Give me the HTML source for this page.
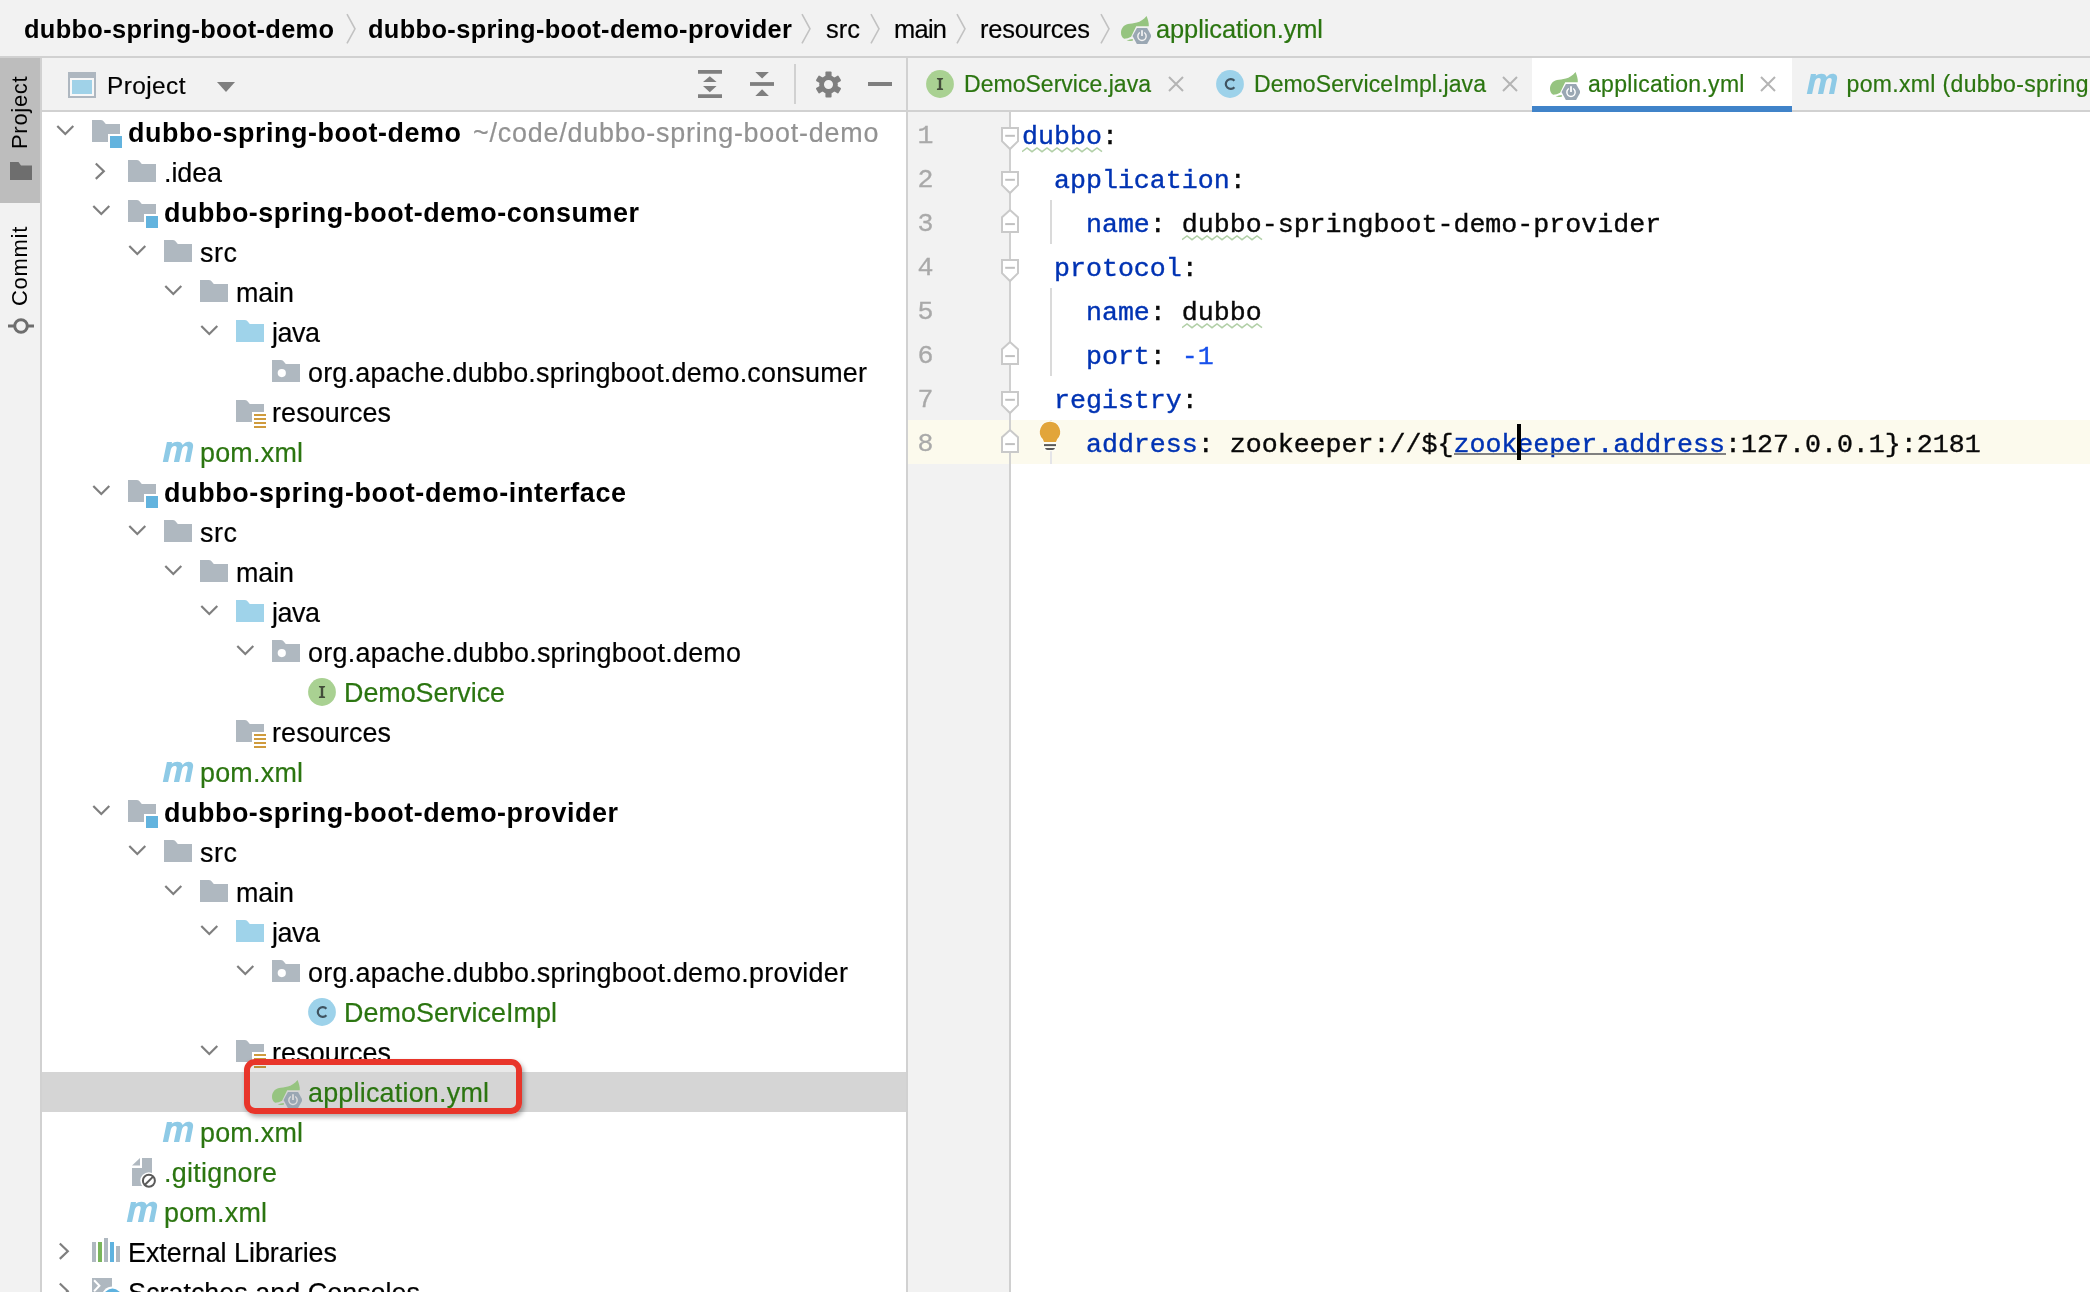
<!DOCTYPE html>
<html><head><meta charset="utf-8"><title>IDE</title>
<style>
*{box-sizing:border-box}
html,body{margin:0;padding:0}
body{width:2090px;height:1292px;overflow:hidden;background:#fff;position:relative;font-family:"Liberation Sans",sans-serif;color:#000}
#root{position:absolute;left:0;top:0;width:2090px;height:1292px;overflow:hidden;will-change:transform}
.abs{position:absolute}
.t{position:absolute;white-space:pre;line-height:40px;font-size:26px;-webkit-text-stroke:0.200px}
.b{font-weight:700;-webkit-text-stroke:0}
.g{color:#2b7510}
.ic{position:absolute;width:32px;height:32px}
#crumb{left:0;top:0;width:2090px;height:58px;background:#f2f2f2;border-bottom:2px solid #d1d1d1}
#stripe{left:0;top:58px;width:42px;height:1234px;background:#f2f2f2;border-right:2px solid #d1d1d1}
#stripesel{left:0;top:58px;width:40px;height:145px;background:#bdbdbd}
#phead{left:42px;top:58px;width:865px;height:54px;background:#f2f2f2;border-bottom:2px solid #d1d1d1}
#split{left:906px;top:58px;width:2px;height:1234px;background:#d1d1d1}
#tabs{left:908px;top:58px;width:1182px;height:54px;background:#f2f2f2;border-bottom:2px solid #d1d1d1}
#gutter{left:908px;top:112px;width:103px;height:1180px;background:#f2f2f2;border-right:2px solid #d0d0d0}
#curline{left:908px;top:420px;width:1182px;height:44px;background:#fcfaed}
#sel{left:42px;top:1072px;width:864px;height:40px;background:#d5d5d5}
.c{position:absolute;white-space:pre;font-family:"Liberation Mono",monospace;font-size:26.640px;line-height:44px;left:1022px;color:#080808;-webkit-text-stroke:0.380px}
.k{color:#0033b3}
.n{color:#1750eb}
.ln{position:absolute;left:917.500px;font-size:26.600px;line-height:44px;color:#a9a9a9;font-family:"Liberation Mono",monospace;-webkit-text-stroke:0.300px}
.w{background:repeating-linear-gradient(90deg,transparent,transparent);}
.vt{position:absolute;white-space:pre;font-size:22px;line-height:40px;transform-origin:0 0;transform:rotate(-90deg)}
.gray{color:#929292}
</style></head>
<body>

<svg width="0" height="0" style="position:absolute">
<defs>
<symbol id="i-folder" viewBox="0 0 32 32"><path d="M2 4h8.500q2 0 3 1.300L15.800 8H30v18H2z" fill="#afb8c0"/></symbol>
<symbol id="i-src" viewBox="0 0 32 32"><path d="M2 4h8.500q2 0 3 1.300L15.800 8H30v18H2z" fill="#9fd3ea"/></symbol>
<symbol id="i-module" viewBox="0 0 32 32"><path d="M2 4h8.500q2 0 3 1.300L15.800 8H30v10H18v8H2z" fill="#afb8c0"/><rect x="20" y="20" width="12" height="12" fill="#62b3de"/></symbol>
<symbol id="i-pkg" viewBox="0 0 32 32"><path d="M2 4h8.500q2 0 3 1.300L15.800 8H30v18H2z" fill="#afb8c0"/><circle cx="11.800" cy="17.100" r="4.100" fill="#fff"/></symbol>
<symbol id="i-res" viewBox="0 0 32 32"><path d="M2 4h8.500q2 0 3 1.300L15.800 8H30v8H18v10H2z" fill="#afb8c0"/><path d="M20 18h12v2H20zM20 22h12v2H20zM20 26h12v2H20zM20 30h12v2H20z" fill="#cf9b3d"/></symbol>
<symbol id="i-I" viewBox="0 0 32 32"><circle cx="16" cy="16" r="13.900" fill="#a9d192"/><path d="M12.900 10h6.200v0.600q0 1.100-1.300 1.100h-0.600v8.600h0.600q1.300 0 1.300 1.100v0.600h-6.200v-0.600q0-1.100 1.300-1.100h0.600v-8.600h-0.600q-1.300 0-1.300-1.100z" fill="#434d3a"/></symbol>
<symbol id="i-C" viewBox="0 0 32 32"><circle cx="16" cy="16" r="13.900" fill="#9dd2ea"/><path d="M20.400 19.200a4.900 4.900 0 1 1 0-6.400" fill="none" stroke="#3f5360" stroke-width="2.200"/></symbol>
<symbol id="i-m" viewBox="0 0 32 32"><path d="M0.800 26.100L4.900 6H10L9.700 7.800C11.300 6.400 13.300 5.700 15.300 5.700C18.300 5.700 20.100 6.900 20.600 9C22.300 6.900 24.400 5.700 26.600 5.700C29.900 5.700 31.700 7.800 31 11.200L28.100 26.100H23L25.600 12.900C26 10.900 25.300 9.900 23.800 9.900C21.900 9.900 20.400 11.400 19.900 13.700L17.200 26.100H11.900L14.600 12.900C15 10.900 14.300 9.900 12.800 9.900C10.900 9.900 9.300 11.400 8.800 13.700L6.100 26.100z" fill="#8ecae6"/></symbol>
<symbol id="i-yml" viewBox="0 0 32 32"><path d="M27.600 2.900C28.800 6 30 9.500 29.800 13.300H17.200L12.100 23.700C10 25 7.500 25.700 5.200 25.700C3 24.500 2 22.500 2 20C2 15.500 4.500 12 9 11C14 10 21.500 10.500 27.600 2.900z" fill="#96c480"/><path d="M7.600 27.600Q11 26.200 13.800 25.900v1.900Q10 28.200 7.600 27.600z" fill="#96c480"/><path d="M17.900 15.100h10.200l4.400 7.900-4.400 7.900H17.900l-4.400-7.900z" fill="#9aa7b3"/><circle cx="23" cy="23.300" r="4.150" fill="none" stroke="var(--pw,#f2f2f2)" stroke-width="1.450"/><path d="M23 16.500v6.500" stroke="#9aa7b3" stroke-width="4.200"/><path d="M23 17.200v5.800" stroke="var(--pw,#f2f2f2)" stroke-width="1.750"/></symbol>
<symbol id="i-git" viewBox="0 0 32 32"><path d="M16 2h10v28H6V12h10z" fill="#afb8c0"/><path d="M6 9.500L14 2v7.500z" fill="#afb8c0"/><circle cx="22.900" cy="24.800" r="8.600" fill="#fff"/><circle cx="22.900" cy="24.800" r="6" fill="none" stroke="#5a5a5a" stroke-width="2"/><path d="M18.700 29l8.400-8.400" stroke="#5a5a5a" stroke-width="2"/></symbol>
<symbol id="i-lib" viewBox="0 0 32 32"><rect x="2" y="6" width="4" height="20" fill="#afb8c0"/><rect x="8" y="6" width="4" height="20" fill="#7ab55c"/><rect x="14" y="2" width="4" height="24" fill="#afb8c0"/><rect x="20" y="6" width="4" height="20" fill="#5eb2df"/><rect x="26" y="10" width="4" height="16" fill="#afb8c0"/></symbol>
<symbol id="i-scr" viewBox="0 0 32 32"><path d="M2 2h20v24H2z" fill="#afb8c0"/><path d="M4.100 4.300l5.300 5.500-5.300 5.500" fill="none" stroke="#fff" stroke-width="2"/><circle cx="22.500" cy="21.500" r="11" fill="#fff"/><circle cx="22.500" cy="21.500" r="9" fill="#5eb2df"/></symbol>
<symbol id="i-down" viewBox="0 0 32 32"><path d="M8.300 10l8 8 8-8" fill="none" stroke="#7f7f7f" stroke-width="2.200"/></symbol>
<symbol id="i-right" viewBox="0 0 32 32"><path d="M10.800 7.500l8 7.700-8 7.700" fill="none" stroke="#7f7f7f" stroke-width="2.200"/></symbol>
<symbol id="i-x" viewBox="0 0 32 32"><path d="M9 9l14 14M23 9L9 23" stroke="#b4b4b4" stroke-width="2" fill="none"/></symbol>
<symbol id="f-start" viewBox="0 0 20 26"><path d="M2 2h16v13.200l-8 7.800-8-7.800z" fill="#fff" stroke="#c9c9c9" stroke-width="2"/><path d="M5.200 9.800h9.700" stroke="#c0c0c0" stroke-width="2"/></symbol>
<symbol id="f-end" viewBox="0 0 20 26"><path d="M2 24h16V9.200L10 2 2 9.200z" fill="#fff" stroke="#c9c9c9" stroke-width="2"/><path d="M5.200 16.100h9.700" stroke="#c0c0c0" stroke-width="2"/></symbol>
</defs>
</svg>
<div id="root">
<div class="abs" id="crumb"></div>
<span class="t b" style="left:24px;top:8.9px;letter-spacing:0.324px;font-size:25.4px;line-height:40px;">dubbo-spring-boot-demo</span>
<span class="t b" style="left:368px;top:8.9px;letter-spacing:0.358px;font-size:25.4px;line-height:40px;">dubbo-spring-boot-demo-provider</span>
<span class="t " style="left:826px;top:8.9px;letter-spacing:0.07px;font-size:25.4px;line-height:40px;">src</span>
<span class="t " style="left:894px;top:8.9px;letter-spacing:-0.682px;font-size:25.4px;line-height:40px;">main</span>
<span class="t " style="left:980px;top:8.9px;letter-spacing:-0.186px;font-size:25.4px;line-height:40px;">resources</span>
<span class="t g" style="left:1156px;top:8.9px;letter-spacing:-0.068px;font-size:25.4px;line-height:40px;">application.yml</span>
<svg class="abs" style="left:345px;top:13px" width="12" height="32"><path d="M2 1.200l8 14.600-8 14.600" fill="none" stroke="#c2c2c2" stroke-width="1.600"/></svg>
<svg class="abs" style="left:800.4px;top:13px" width="12" height="32"><path d="M2 1.200l8 14.600-8 14.600" fill="none" stroke="#c2c2c2" stroke-width="1.600"/></svg>
<svg class="abs" style="left:868.9px;top:13px" width="12" height="32"><path d="M2 1.200l8 14.600-8 14.600" fill="none" stroke="#c2c2c2" stroke-width="1.600"/></svg>
<svg class="abs" style="left:954.9px;top:13px" width="12" height="32"><path d="M2 1.200l8 14.600-8 14.600" fill="none" stroke="#c2c2c2" stroke-width="1.600"/></svg>
<svg class="abs" style="left:1099.1px;top:13px" width="12" height="32"><path d="M2 1.200l8 14.600-8 14.600" fill="none" stroke="#c2c2c2" stroke-width="1.600"/></svg>
<svg class="ic" style="left:1118.6px;top:12.9px;width:32px;height:32px;"><use href="#i-yml"/></svg>
<div class="abs" id="stripe"></div><div class="abs" id="stripesel"></div>
<span class="vt" style="left:0px;top:148.500px;letter-spacing:0.700px">Project</span>
<span class="vt" style="left:0px;top:305.500px;letter-spacing:0.700px">Commit</span>
<svg class="abs" style="left:10px;top:162px" width="22" height="18"><path d="M0 0h8.500l2.500 3.500h11V18H0z" fill="#6e6e6e"/></svg>
<svg class="abs" style="left:8px;top:314px" width="26" height="24"><circle cx="13" cy="12" r="6.300" fill="none" stroke="#6e6e6e" stroke-width="3"/><path d="M0 12h6M20 12h6" stroke="#6e6e6e" stroke-width="3"/></svg>
<div class="abs" id="phead"></div>
<svg class="abs" style="left:68px;top:72px" width="28" height="26"><rect width="28" height="26" fill="#aeb7c0"/><rect x="2" y="6" width="24" height="18" fill="#f8f8f8"/><rect x="4" y="8" width="20" height="14" fill="#a0d2e8"/></svg>
<span class="t " style="left:107px;top:65.6px;letter-spacing:0.43px;font-size:24.4px;line-height:40px;">Project</span>
<svg class="abs" style="left:217px;top:82px" width="18" height="10"><path d="M0 0h18l-9 10z" fill="#7f7f7f"/></svg>
<svg class="abs" style="left:698px;top:70px" width="24" height="28"><path d="M0 0h24v3.800H0zM0 24.200h24V28H0z" fill="#7f7f7f"/><path d="M5 12l6.800-5.800 6.800 5.800zM5 16l6.800 6.200 6.800-6.200z" fill="#7f7f7f"/></svg>
<svg class="abs" style="left:750px;top:70px" width="24" height="28"><path d="M0 12.100h24v3.800H0z" fill="#7f7f7f"/><path d="M5.300 2.100l6.800 6.500 6.800-6.500zM5.300 25.900l6.800-6.600 6.800 6.600z" fill="#7f7f7f"/></svg>
<div class="abs" style="left:794px;top:64px;width:2px;height:40px;background:#d1d1d1"></div>
<svg class="abs" style="left:815px;top:70.500px" width="27" height="27" viewBox="-14 -14 28 28"><g fill="#7f7f7f"><rect x="-3.200" y="-13.500" width="6.400" height="8" rx="1" transform="rotate(0)"/><rect x="-3.200" y="-13.500" width="6.400" height="8" rx="1" transform="rotate(60)"/><rect x="-3.200" y="-13.500" width="6.400" height="8" rx="1" transform="rotate(120)"/><rect x="-3.200" y="-13.500" width="6.400" height="8" rx="1" transform="rotate(180)"/><rect x="-3.200" y="-13.500" width="6.400" height="8" rx="1" transform="rotate(240)"/><rect x="-3.200" y="-13.500" width="6.400" height="8" rx="1" transform="rotate(300)"/></g><circle r="7.200" fill="none" stroke="#7f7f7f" stroke-width="5"/></svg>
<div class="abs" style="left:868px;top:82px;width:24px;height:4px;background:#7f7f7f"></div>
<div class="abs" id="sel"></div>
<svg class="ic" style="left:49px;top:116px;width:32px;height:32px;"><use href="#i-down"/></svg>
<svg class="ic" style="left:90px;top:116px;width:32px;height:32px;"><use href="#i-module"/></svg>
<span class="t b" style="left:128px;top:112.8px;letter-spacing:0.565px;font-size:26.9px;line-height:40px;">dubbo-spring-boot-demo</span>
<span class="t gray" style="left:473px;top:112.8px;letter-spacing:0.787px;font-size:26.9px;line-height:40px;">~/code/dubbo-spring-boot-demo</span>
<svg class="ic" style="left:85px;top:156px;width:32px;height:32px;"><use href="#i-right"/></svg>
<svg class="ic" style="left:126px;top:156px;width:32px;height:32px;"><use href="#i-folder"/></svg>
<span class="t " style="left:164px;top:152.8px;letter-spacing:-0.078px;font-size:26.9px;line-height:40px;">.idea</span>
<svg class="ic" style="left:85px;top:196px;width:32px;height:32px;"><use href="#i-down"/></svg>
<svg class="ic" style="left:126px;top:196px;width:32px;height:32px;"><use href="#i-module"/></svg>
<span class="t b" style="left:164px;top:192.8px;letter-spacing:0.547px;font-size:26.9px;line-height:40px;">dubbo-spring-boot-demo-consumer</span>
<svg class="ic" style="left:121px;top:236px;width:32px;height:32px;"><use href="#i-down"/></svg>
<svg class="ic" style="left:162px;top:236px;width:32px;height:32px;"><use href="#i-folder"/></svg>
<span class="t " style="left:200px;top:232.8px;letter-spacing:0.57px;font-size:26.9px;line-height:40px;">src</span>
<svg class="ic" style="left:157px;top:276px;width:32px;height:32px;"><use href="#i-down"/></svg>
<svg class="ic" style="left:198px;top:276px;width:32px;height:32px;"><use href="#i-folder"/></svg>
<span class="t " style="left:236px;top:272.8px;letter-spacing:-0.099px;font-size:26.9px;line-height:40px;">main</span>
<svg class="ic" style="left:193px;top:316px;width:32px;height:32px;"><use href="#i-down"/></svg>
<svg class="ic" style="left:234px;top:316px;width:32px;height:32px;"><use href="#i-src"/></svg>
<span class="t " style="left:272px;top:312.8px;letter-spacing:-0.448px;font-size:26.9px;line-height:40px;">java</span>
<svg class="ic" style="left:270px;top:356px;width:32px;height:32px;"><use href="#i-pkg"/></svg>
<span class="t " style="left:308px;top:352.8px;letter-spacing:0.221px;font-size:26.9px;line-height:40px;">org.apache.dubbo.springboot.demo.consumer</span>
<svg class="ic" style="left:234px;top:396px;width:32px;height:32px;"><use href="#i-res"/></svg>
<span class="t " style="left:272px;top:392.8px;letter-spacing:0.115px;font-size:26.9px;line-height:40px;">resources</span>
<svg class="ic" style="left:162px;top:436px;width:32px;height:32px;"><use href="#i-m"/></svg>
<span class="t g" style="left:200px;top:432.8px;letter-spacing:0.232px;font-size:26.9px;line-height:40px;">pom.xml</span>
<svg class="ic" style="left:85px;top:476px;width:32px;height:32px;"><use href="#i-down"/></svg>
<svg class="ic" style="left:126px;top:476px;width:32px;height:32px;"><use href="#i-module"/></svg>
<span class="t b" style="left:164px;top:472.8px;letter-spacing:0.64px;font-size:26.9px;line-height:40px;">dubbo-spring-boot-demo-interface</span>
<svg class="ic" style="left:121px;top:516px;width:32px;height:32px;"><use href="#i-down"/></svg>
<svg class="ic" style="left:162px;top:516px;width:32px;height:32px;"><use href="#i-folder"/></svg>
<span class="t " style="left:200px;top:512.8px;letter-spacing:0.57px;font-size:26.9px;line-height:40px;">src</span>
<svg class="ic" style="left:157px;top:556px;width:32px;height:32px;"><use href="#i-down"/></svg>
<svg class="ic" style="left:198px;top:556px;width:32px;height:32px;"><use href="#i-folder"/></svg>
<span class="t " style="left:236px;top:552.8px;letter-spacing:-0.099px;font-size:26.9px;line-height:40px;">main</span>
<svg class="ic" style="left:193px;top:596px;width:32px;height:32px;"><use href="#i-down"/></svg>
<svg class="ic" style="left:234px;top:596px;width:32px;height:32px;"><use href="#i-src"/></svg>
<span class="t " style="left:272px;top:592.8px;letter-spacing:-0.448px;font-size:26.9px;line-height:40px;">java</span>
<svg class="ic" style="left:229px;top:636px;width:32px;height:32px;"><use href="#i-down"/></svg>
<svg class="ic" style="left:270px;top:636px;width:32px;height:32px;"><use href="#i-pkg"/></svg>
<span class="t " style="left:308px;top:632.8px;letter-spacing:0.271px;font-size:26.9px;line-height:40px;">org.apache.dubbo.springboot.demo</span>
<svg class="ic" style="left:306px;top:676px;width:32px;height:32px;"><use href="#i-I"/></svg>
<span class="t g" style="left:344px;top:672.8px;letter-spacing:-0.041px;font-size:26.9px;line-height:40px;">DemoService</span>
<svg class="ic" style="left:234px;top:716px;width:32px;height:32px;"><use href="#i-res"/></svg>
<span class="t " style="left:272px;top:712.8px;letter-spacing:0.115px;font-size:26.9px;line-height:40px;">resources</span>
<svg class="ic" style="left:162px;top:756px;width:32px;height:32px;"><use href="#i-m"/></svg>
<span class="t g" style="left:200px;top:752.8px;letter-spacing:0.232px;font-size:26.9px;line-height:40px;">pom.xml</span>
<svg class="ic" style="left:85px;top:796px;width:32px;height:32px;"><use href="#i-down"/></svg>
<svg class="ic" style="left:126px;top:796px;width:32px;height:32px;"><use href="#i-module"/></svg>
<span class="t b" style="left:164px;top:792.8px;letter-spacing:0.545px;font-size:26.9px;line-height:40px;">dubbo-spring-boot-demo-provider</span>
<svg class="ic" style="left:121px;top:836px;width:32px;height:32px;"><use href="#i-down"/></svg>
<svg class="ic" style="left:162px;top:836px;width:32px;height:32px;"><use href="#i-folder"/></svg>
<span class="t " style="left:200px;top:832.8px;letter-spacing:0.57px;font-size:26.9px;line-height:40px;">src</span>
<svg class="ic" style="left:157px;top:876px;width:32px;height:32px;"><use href="#i-down"/></svg>
<svg class="ic" style="left:198px;top:876px;width:32px;height:32px;"><use href="#i-folder"/></svg>
<span class="t " style="left:236px;top:872.8px;letter-spacing:-0.099px;font-size:26.9px;line-height:40px;">main</span>
<svg class="ic" style="left:193px;top:916px;width:32px;height:32px;"><use href="#i-down"/></svg>
<svg class="ic" style="left:234px;top:916px;width:32px;height:32px;"><use href="#i-src"/></svg>
<span class="t " style="left:272px;top:912.8px;letter-spacing:-0.448px;font-size:26.9px;line-height:40px;">java</span>
<svg class="ic" style="left:229px;top:956px;width:32px;height:32px;"><use href="#i-down"/></svg>
<svg class="ic" style="left:270px;top:956px;width:32px;height:32px;"><use href="#i-pkg"/></svg>
<span class="t " style="left:308px;top:952.8px;letter-spacing:0.27px;font-size:26.9px;line-height:40px;">org.apache.dubbo.springboot.demo.provider</span>
<svg class="ic" style="left:306px;top:996px;width:32px;height:32px;"><use href="#i-C"/></svg>
<span class="t g" style="left:344px;top:992.8px;letter-spacing:0.057px;font-size:26.9px;line-height:40px;">DemoServiceImpl</span>
<svg class="ic" style="left:193px;top:1036px;width:32px;height:32px;"><use href="#i-down"/></svg>
<svg class="ic" style="left:234px;top:1036px;width:32px;height:32px;"><use href="#i-res"/></svg>
<span class="t " style="left:272px;top:1032.8px;letter-spacing:0.115px;font-size:26.9px;line-height:40px;">resources</span>
<svg class="ic" style="left:270px;top:1077px;width:32px;height:32px;--pw:#dcdcdc"><use href="#i-yml"/></svg>
<span class="t g" style="left:308px;top:1072.8px;letter-spacing:0.223px;font-size:26.9px;line-height:40px;">application.yml</span>
<svg class="ic" style="left:162px;top:1116px;width:32px;height:32px;"><use href="#i-m"/></svg>
<span class="t g" style="left:200px;top:1112.8px;letter-spacing:0.232px;font-size:26.9px;line-height:40px;">pom.xml</span>
<svg class="ic" style="left:126px;top:1156px;width:32px;height:32px;"><use href="#i-git"/></svg>
<span class="t g" style="left:164px;top:1152.8px;letter-spacing:0.264px;font-size:26.9px;line-height:40px;">.gitignore</span>
<svg class="ic" style="left:126px;top:1196px;width:32px;height:32px;"><use href="#i-m"/></svg>
<span class="t g" style="left:164px;top:1192.8px;letter-spacing:0.232px;font-size:26.9px;line-height:40px;">pom.xml</span>
<svg class="ic" style="left:49px;top:1236px;width:32px;height:32px;"><use href="#i-right"/></svg>
<svg class="ic" style="left:90px;top:1236px;width:32px;height:32px;"><use href="#i-lib"/></svg>
<span class="t " style="left:128px;top:1232.8px;letter-spacing:-0.015px;font-size:26.9px;line-height:40px;">External Libraries</span>
<svg class="ic" style="left:49px;top:1276px;width:32px;height:32px;"><use href="#i-right"/></svg>
<svg class="ic" style="left:90px;top:1276px;width:32px;height:32px;"><use href="#i-scr"/></svg>
<span class="t " style="left:128px;top:1272.8px;letter-spacing:0.025px;font-size:26.9px;line-height:40px;">Scratches and Consoles</span>
<div class="abs" style="left:249px;top:1064px;width:268px;height:8px;background:rgba(0,0,0,.085)"></div>
<div class="abs" style="left:243.800px;top:1058.800px;width:278.200px;height:55.200px;border:6px solid #e8352a;border-radius:11px;box-shadow:2px 3px 5px rgba(0,0,0,.32)"></div>
<div class="abs" id="split"></div>
<div class="abs" id="tabs"></div>
<div class="abs" style="left:1532px;top:58px;width:260px;height:54px;background:#fff"></div>
<div class="abs" style="left:1532px;top:106px;width:260px;height:6px;background:#4083c9"></div>
<svg class="ic" style="left:924px;top:68px;width:32px;height:32px;"><use href="#i-I"/></svg>
<span class="t g" style="left:964px;top:64.2px;letter-spacing:0.024px;font-size:23px;line-height:40px;">DemoService.java</span>
<svg class="ic" style="left:1160px;top:68px;width:32px;height:32px;"><use href="#i-x"/></svg>
<svg class="ic" style="left:1214px;top:68px;width:32px;height:32px;"><use href="#i-C"/></svg>
<span class="t g" style="left:1254px;top:64.2px;letter-spacing:0.1px;font-size:23px;line-height:40px;">DemoServiceImpl.java</span>
<svg class="ic" style="left:1494px;top:68px;width:32px;height:32px;"><use href="#i-x"/></svg>
<svg class="ic" style="left:1547.8px;top:69px;width:32px;height:32px;--pw:#fff"><use href="#i-yml"/></svg>
<span class="t g" style="left:1588px;top:64.2px;letter-spacing:0.311px;font-size:23px;line-height:40px;">application.yml</span>
<svg class="ic" style="left:1752px;top:68px;width:32px;height:32px;"><use href="#i-x"/></svg>
<svg class="ic" style="left:1806px;top:68px;width:32px;height:32px;"><use href="#i-m"/></svg>
<span class="t g" style="left:1846.5px;top:64.2px;letter-spacing:0.339px;font-size:23px;line-height:40px;">pom.xml (dubbo-spring</span>
<div class="abs" id="curline"></div>
<div class="abs" id="gutter"></div>
<div class="abs" style="left:908px;top:420px;width:101px;height:44px;background:#fcfaed"></div>
<span class="ln" style="top:114px">1</span>
<span class="c" style="top:115px"><span class="k">dubbo</span>:</span>
<span class="ln" style="top:158px">2</span>
<span class="c" style="top:159px">  <span class="k">application</span>:</span>
<span class="ln" style="top:202px">3</span>
<span class="c" style="top:203px">    <span class="k">name</span>: dubbo-springboot-demo-provider</span>
<span class="ln" style="top:246px">4</span>
<span class="c" style="top:247px">  <span class="k">protocol</span>:</span>
<span class="ln" style="top:290px">5</span>
<span class="c" style="top:291px">    <span class="k">name</span>: dubbo</span>
<span class="ln" style="top:334px">6</span>
<span class="c" style="top:335px">    <span class="k">port</span>: <span class="n">-1</span></span>
<span class="ln" style="top:378px">7</span>
<span class="c" style="top:379px">  <span class="k">registry</span>:</span>
<span class="ln" style="top:422px">8</span>
<span class="c" style="top:423px">    <span class="k">address</span>: zookeeper://${<span class="k">zookeeper.address</span>:127.0.0.1}:2181</span>
<div class="abs" style="left:1050px;top:200px;width:2px;height:44px;background:#dadada"></div>
<div class="abs" style="left:1050px;top:288px;width:2px;height:88px;background:#dadada"></div>
<div class="abs" style="left:1050px;top:420px;width:2px;height:44px;background:#e4e4e8"></div>
<svg class="ic" style="left:1000px;top:126px;width:20px;height:26px;"><use href="#f-start"/></svg>
<svg class="ic" style="left:1000px;top:170px;width:20px;height:26px;"><use href="#f-start"/></svg>
<svg class="ic" style="left:1000px;top:207.5px;width:20px;height:26px;"><use href="#f-end"/></svg>
<svg class="ic" style="left:1000px;top:258px;width:20px;height:26px;"><use href="#f-start"/></svg>
<svg class="ic" style="left:1000px;top:339.5px;width:20px;height:26px;"><use href="#f-end"/></svg>
<svg class="ic" style="left:1000px;top:390px;width:20px;height:26px;"><use href="#f-start"/></svg>
<svg class="ic" style="left:1000px;top:427.5px;width:20px;height:26px;"><use href="#f-end"/></svg>
<svg class="abs" style="left:1022px;top:146.8px" width="81" height="6"><polyline points="0.0,4.7 5.0,1 10.0,4.7 15.0,1 20.0,4.7 25.0,1 30.0,4.7 35.0,1 40.0,4.7 45.0,1 50.0,4.7 55.0,1 60.0,4.7 65.0,1 70.0,4.7 75.0,1 80.0,4.7" fill="none" stroke="#b2d0a8" stroke-width="1.500"/></svg>
<svg class="abs" style="left:1182px;top:234.8px" width="81" height="6"><polyline points="0.0,4.7 5.0,1 10.0,4.7 15.0,1 20.0,4.7 25.0,1 30.0,4.7 35.0,1 40.0,4.7 45.0,1 50.0,4.7 55.0,1 60.0,4.7 65.0,1 70.0,4.7 75.0,1 80.0,4.7" fill="none" stroke="#b2d0a8" stroke-width="1.500"/></svg>
<svg class="abs" style="left:1182px;top:322.8px" width="81" height="6"><polyline points="0.0,4.7 5.0,1 10.0,4.7 15.0,1 20.0,4.7 25.0,1 30.0,4.7 35.0,1 40.0,4.7 45.0,1 50.0,4.7 55.0,1 60.0,4.7 65.0,1 70.0,4.7 75.0,1 80.0,4.7" fill="none" stroke="#b2d0a8" stroke-width="1.500"/></svg>
<div class="abs" style="left:1454px;top:452.600px;width:272px;height:2.200px;background:#808080"></div>
<div class="abs" style="left:1517px;top:424px;width:4px;height:36px;background:#000"></div>
<svg class="abs" style="left:1038px;top:420px" width="24" height="32"><path d="M12 0.800a11 11 0 0 1 7.500 19.200l-1.300 3.200v8H5.800v-8l-1.300-3.200A11 11 0 0 1 12 0.800z" fill="#fdfcf3"/><path d="M12 1.800a10.100 10.100 0 0 1 7.200 17.200l-1.200 3H6l-1.200-3A10.100 10.100 0 0 1 12 1.800z" fill="#e2a53a"/><rect x="6" y="24.100" width="12" height="2" fill="#595959"/><path d="M7 28.100h10q-0.500 2-2.500 2h-5q-2 0-2.500-2z" fill="#595959"/></svg>
</div>
</body></html>
